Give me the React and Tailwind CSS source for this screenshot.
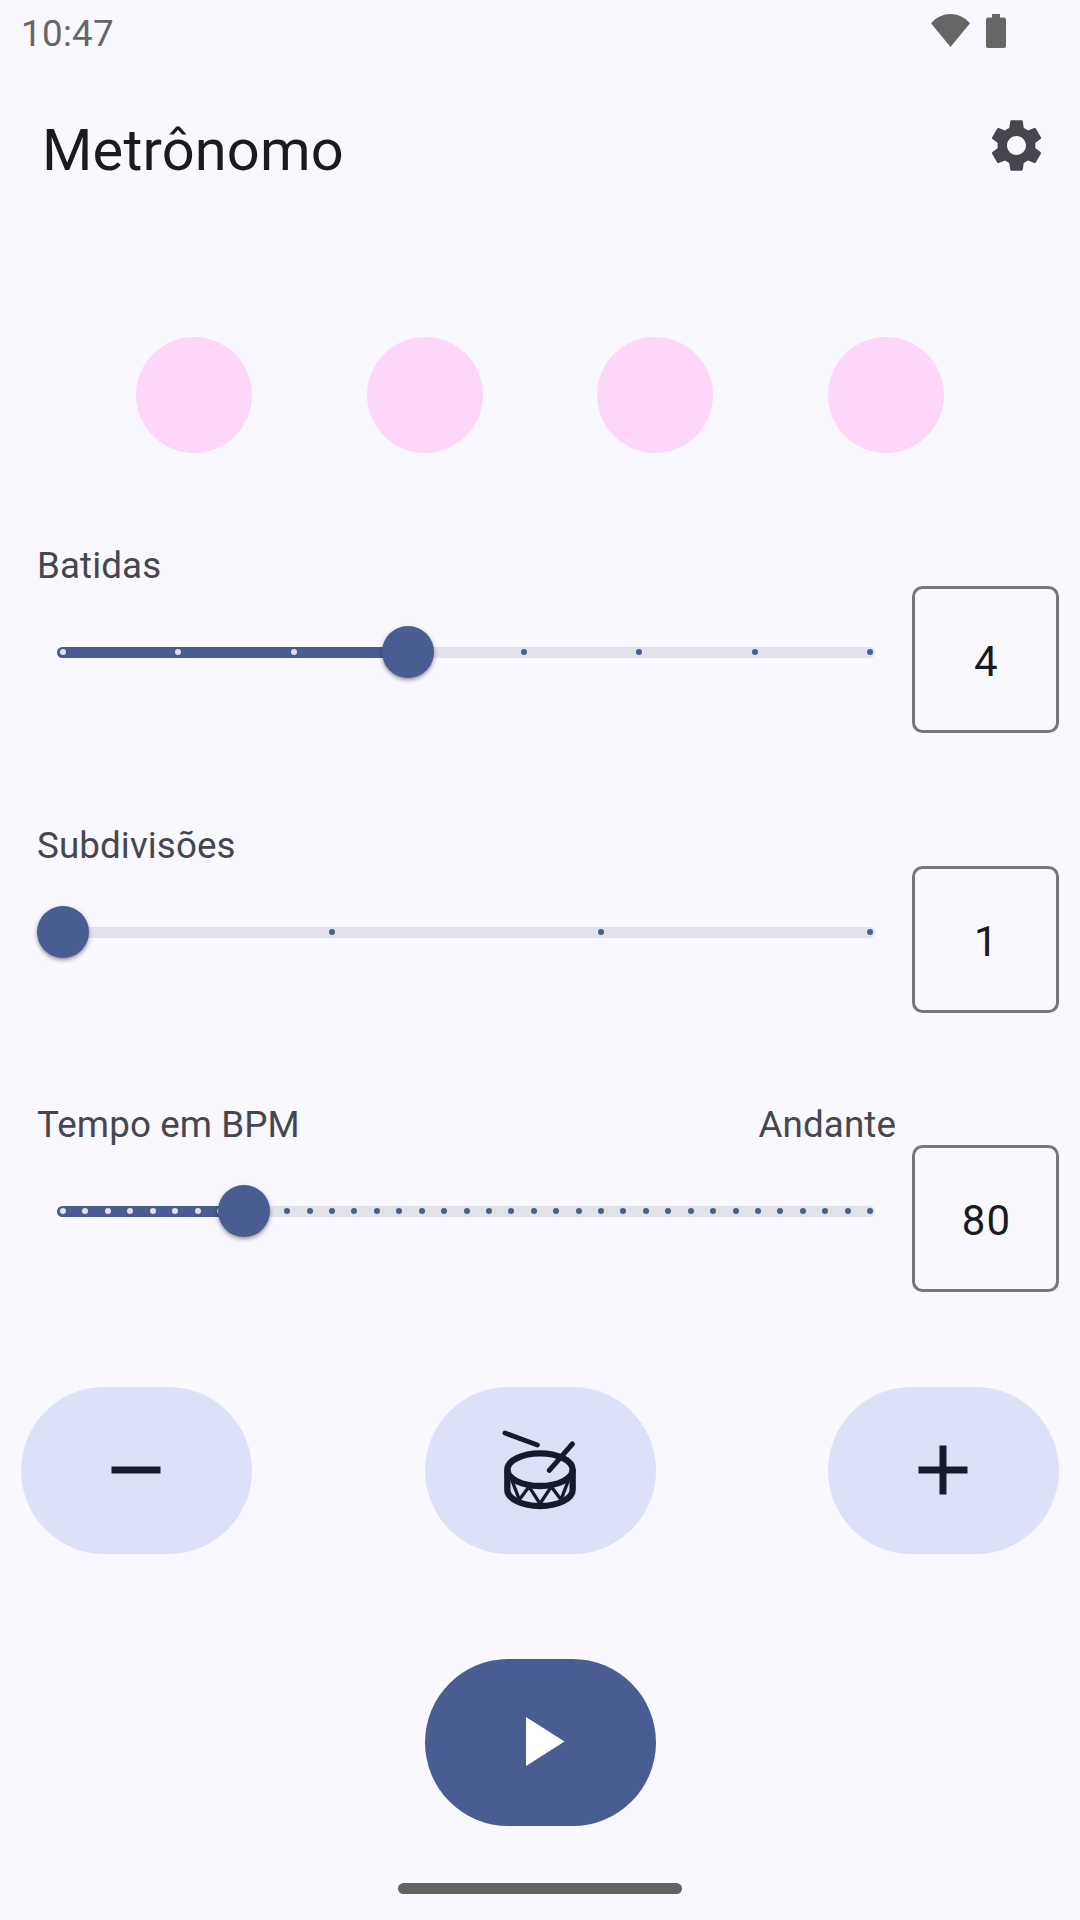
import React from "react";
import { MdSettings } from "react-icons/md";

const TRACK_INSET = 6;
const TICK_SPAN = 807;

function StatusBar() {
  return (
    <div className="flex h-[63px] items-start justify-between pl-[21px] pr-[74px]">
      <span className="mt-[12px] text-[36.75px] leading-[44px] tracking-[0.3px] text-[#666666]">10:47</span>
      <div className="mt-[14px] flex items-start gap-[16px]">
        <svg width="39" height="33" viewBox="0 0 39 33" fill="#666666">
          <path d="M19.5 33 0 9.2C5.2 3.4 12 0 19.5 0S33.8 3.4 39 9.2Z" />
        </svg>
        <svg width="20" height="34" viewBox="0 0 20 34" fill="#666666">
          <path d="M6 0h8v3.4h4a2 2 0 0 1 2 2V32a2 2 0 0 1-2 2H2a2 2 0 0 1-2-2V5.400a2 2 0 0 1 2-2h4Z" />
        </svg>
      </div>
    </div>
  );
}

function Slider({ steps, position }) {
  return (
    <div className="relative ml-[57px] h-[11px] w-[818px] rounded-full bg-[#e2e2ec]">
      <div
        className="absolute inset-y-0 left-0 rounded-l-full bg-[#495d92]"
        style={{ width: position + TRACK_INSET }}
      />
      {Array.from({ length: steps + 1 }, (_, i) => {
        const x = (i * TICK_SPAN) / steps;
        return (
          <span
            key={i}
            className={
              x <= position
                ? "absolute top-[2.5px] size-[6px] rounded-full bg-[#e2e2ec]"
                : "absolute top-[2.5px] size-[6px] rounded-full bg-[#495d92]"
            }
            style={{ left: x + TRACK_INSET - 3 }}
          />
        );
      })}
      <div
        className="absolute top-[-20.5px] size-[52px] rounded-full bg-[#495d92] shadow-[0_2px_4px_rgba(0,0,0,0.42)]"
        style={{ left: position + TRACK_INSET - 26 }}
      />
    </div>
  );
}

function Setting({ label, hint, steps, position, value }) {
  return (
    <section className="flex h-[187px] items-end">
      <div className="flex h-full w-[912px] flex-col">
        <div className="flex justify-between pl-[37px] pr-[16px] text-[36.75px] leading-[40px] tracking-[0.1px] text-[#45464f]">
          <span>{label}</span>
          {hint && <span>{hint}</span>}
        </div>
        <div className="pt-[60.5px]">
          <Slider steps={steps} position={position} />
        </div>
      </div>
      <div className="flex size-[147px] items-center justify-center rounded-[10.5px] border-[3px] border-[#757680] pl-[2px] pt-[3px] text-[42px] leading-[63px] tracking-[1.2px] text-[#1a1b21]">
        {value}
      </div>
    </section>
  );
}

function PillButton({ label, primary, children }) {
  return (
    <button
      aria-label={label}
      className={
        primary
          ? "flex h-[167px] w-[231px] items-center justify-center rounded-full bg-[#495d92]"
          : "flex h-[167px] w-[231px] items-center justify-center rounded-full bg-[#dde1f7]"
      }
    >
      {children}
    </button>
  );
}

function DrumIcon() {
  return (
    <svg className="mb-[11px]" width="120" height="110" viewBox="0 0 360 330" fill="none" stroke="#161b2c">
      <ellipse cx="180" cy="179" rx="98" ry="49" strokeWidth="19" />
      <path d="M82 179v60c0 27 44 49 98 49s98-22 98-49v-60" strokeWidth="19" />
      <path d="m96 212 22 57 29-39 33 51 34-51 29 39 22-57" strokeWidth="10" />
      <path d="m75 69 97 36M277 102l-69 79" strokeWidth="15" strokeLinecap="round" />
    </svg>
  );
}

export default function App() {
  return (
    <main className="flex h-[1920px] w-[1080px] flex-col overflow-hidden bg-[#f9f8ff] font-[Roboto,sans-serif]">
      <StatusBar />
      <header className="flex h-[168px] items-center justify-between pl-[42px] pr-[32px]">
        <h1 className="pt-[5px] text-[57.75px] leading-[74px] tracking-[0.18px] text-[#1a1b21]">Metrônomo</h1>
        <MdSettings className="mb-[3px] size-[63px] text-[#45464f]" />
      </header>

      <div className="mx-[21px] mt-[106px] flex justify-evenly">
        {[0, 1, 2, 3].map((beat) => (
          <span key={beat} className="size-[116px] rounded-full bg-[#fdd6f9]" />
        ))}
      </div>

      <div className="mt-[93px] flex flex-col">
        <Setting label="Batidas" steps={7} position={345} value="4" />
        <div className="h-[93px]" />
        <Setting label="Subdivisões" steps={3} position={0} value="1" />
        <div className="h-[92px]" />
        <Setting label="Tempo em BPM" hint="Andante" steps={36} position={181} value="80" />
      </div>

      <div className="mx-[21px] mt-[95px] flex justify-between">
        <PillButton label="Diminuir">
          <svg className="mb-[1px] mr-[1px]" width="50" height="50" viewBox="0 0 50 50" fill="#161b2c">
            <path d="M.5 21.500h49v7H.5z" />
          </svg>
        </PillButton>
        <PillButton label="Som">
          <DrumIcon />
        </PillButton>
        <PillButton label="Aumentar">
          <svg className="mb-[1px] mr-[1px]" width="50" height="50" viewBox="0 0 50 50" fill="#161b2c">
            <path d="M.5 21.500h21V.5h7v21h21v7h-21v21h-7v-21H.5z" />
          </svg>
        </PillButton>
      </div>

      <div className="mt-[105px] flex justify-center">
        <PillButton label="Tocar" primary>
          <svg className="mb-[2px] ml-[11px]" width="39" height="49" viewBox="0 0 39 49" fill="white">
            <path d="M0 0v49l38.500-24.500z" />
          </svg>
        </PillButton>
      </div>

      <div className="mx-auto mt-[57px] h-[10.5px] w-[284px] rounded-full bg-[#636363]" />
    </main>
  );
}
